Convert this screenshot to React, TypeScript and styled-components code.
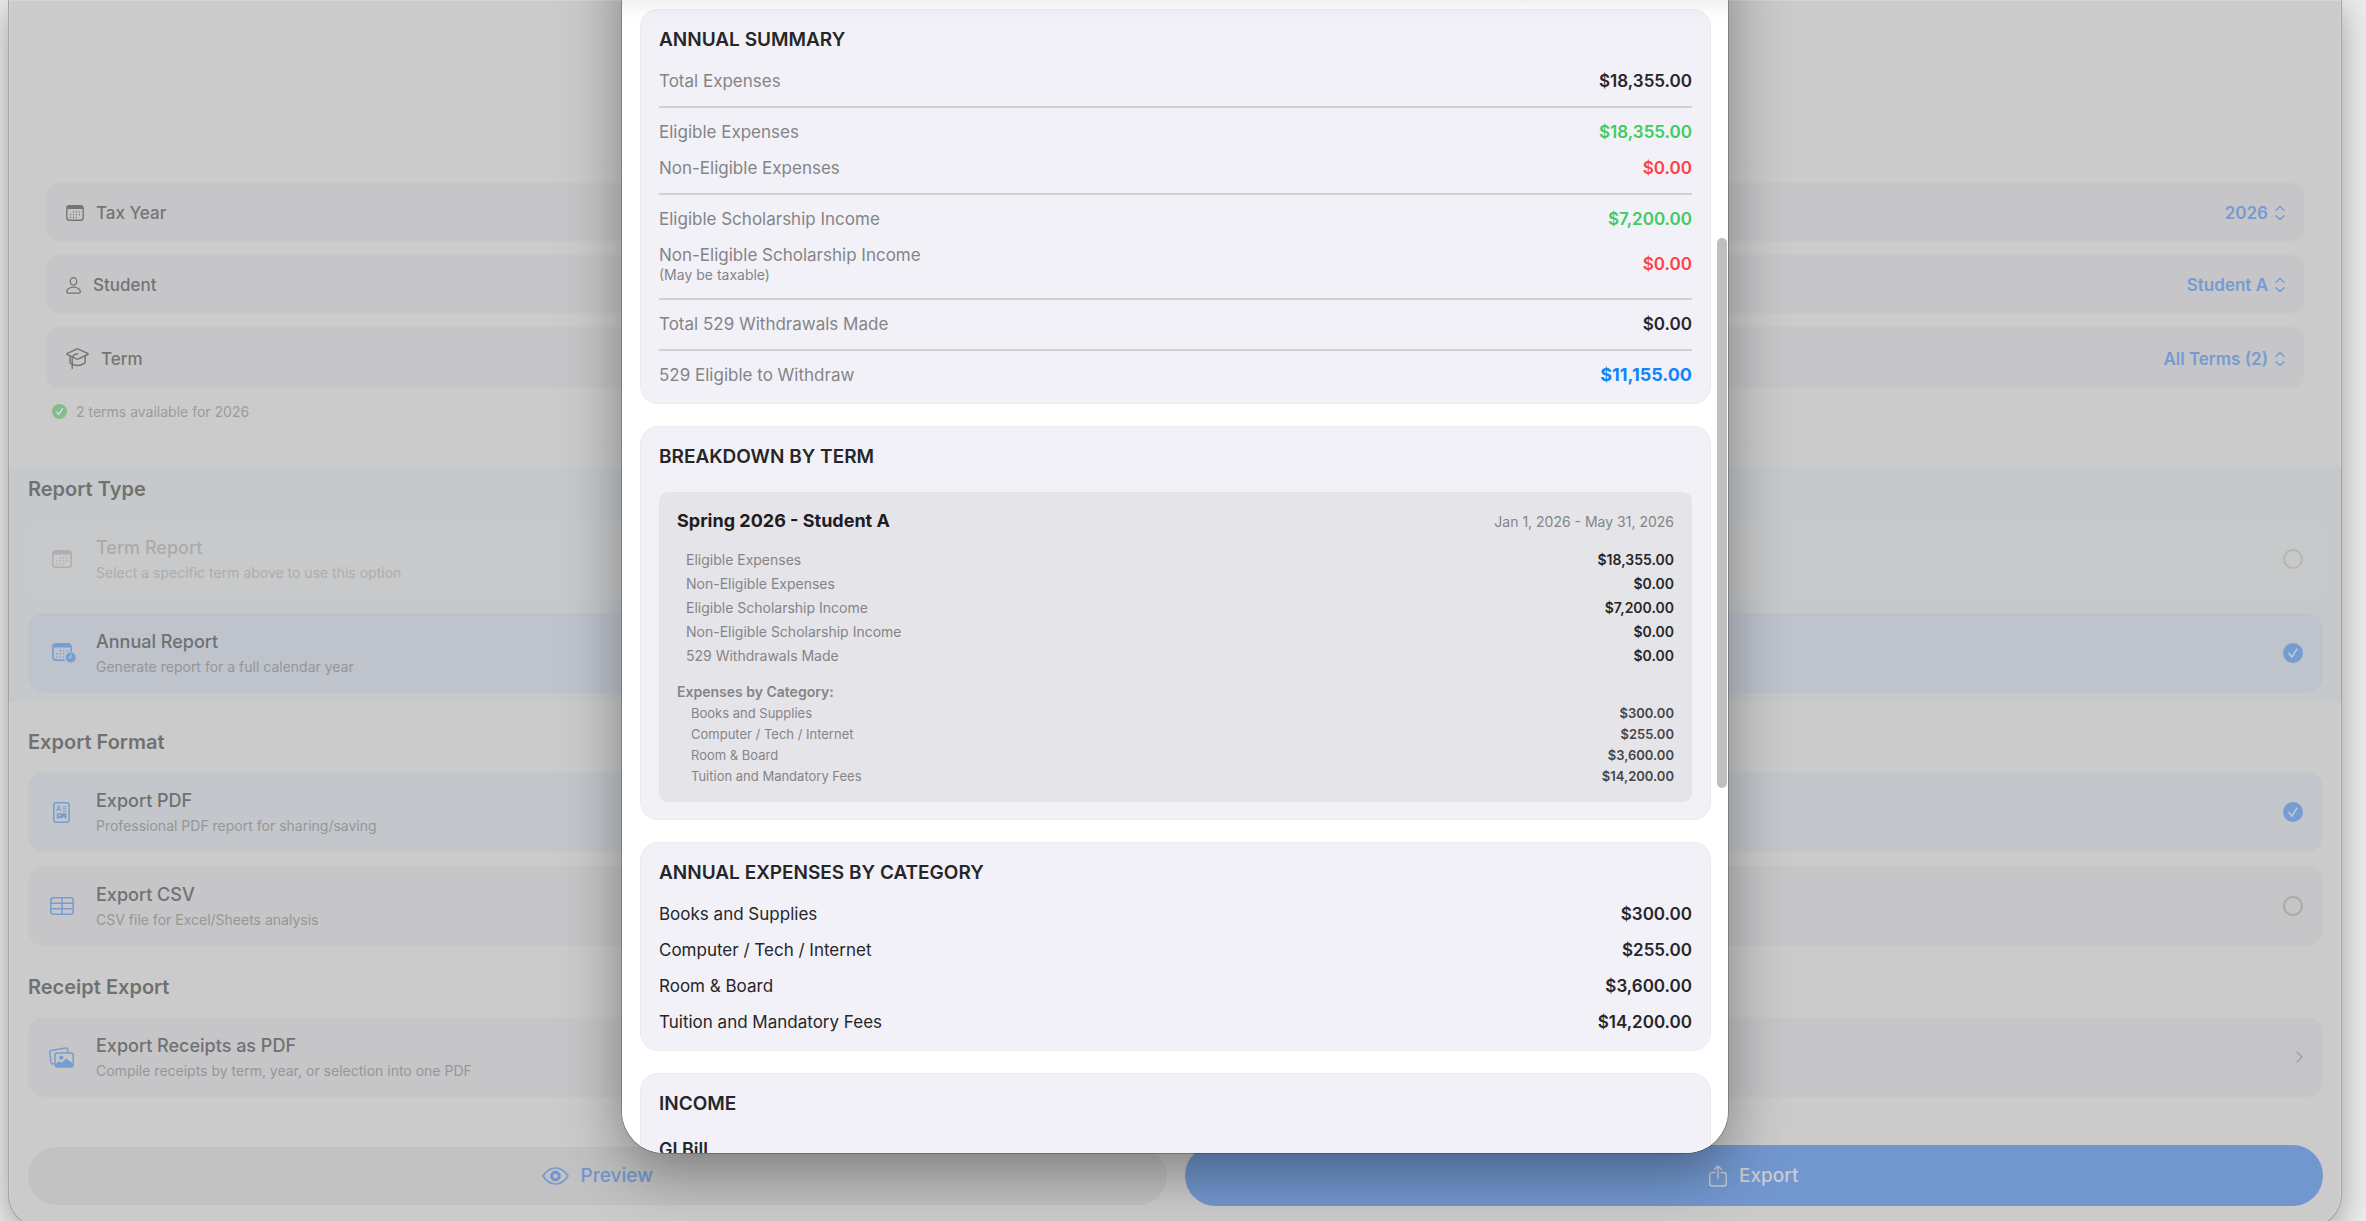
import React from "react";
import styled, { createGlobalStyle, css } from "styled-components";

const GlobalStyle = createGlobalStyle`
  *, *::before, *::after { box-sizing: border-box; }
  body {
    margin: 0;
    background: #ececec;
    font-family: Inter, "Liberation Sans", sans-serif;
    font-size: 18px;
    line-height: 22px;
    color: #6f6f6f;
  }
  h2, h3, p, dl, dd { margin: 0; }
  button, select, input { font: inherit; color: inherit; margin: 0; }
`;

/* ---------- window behind the sheet ---------- */

const Page = styled.div`
  position: relative;
  height: 100vh;
  overflow: hidden;
`;

const Window = styled.main`
  margin: 0 24px 0 8px;
  padding: 163px 18px 20px 19px;
  background: #cbcbcb;
  border: 1px solid #a2a2a2;
  border-top: 0;
  border-radius: 0 0 32px 32px;
  box-shadow: inset 0 0 0 1px #d6d6d6, 0 8px 32px rgba(0, 0, 0, 0.32);
`;

const FilterCard = styled.section`
  display: flex;
  flex-direction: column;
  gap: 14px;
  padding: 19px 18px 19px 17px;
  border: 1px solid #c8c8c9;
  border-radius: 18px;
`;

const FilterRow = styled.div`
  display: flex;
  align-items: center;
  justify-content: space-between;
  padding: 19px 19px 17px 20px;
  background: #c6c6c8;
  border-radius: 12px;
`;

const FilterLabel = styled.label`
  display: flex;
  align-items: center;
  gap: 12px;
  font-size: 17px;
  font-weight: 500;
  color: #747475;
`;

const SelectBox = styled.span`
  display: flex;
  align-items: center;
  gap: 7px;
  color: #759bd0;
`;

const Select = styled.select`
  appearance: none;
  border: 0;
  padding: 0;
  background: none;
  font-size: 17px;
  font-weight: 600;
  text-align: right;
  field-sizing: content;
`;

const Availability = styled.p`
  display: flex;
  align-items: center;
  gap: 9px;
  padding: 1px 6px 2px;
  font-size: 14px;
  line-height: 17px;
  color: #9b9b9b;
`;

const Section = styled.section<{ $tinted?: boolean; $top: number }>`
  margin: ${(p) => p.$top}px -18px 0 -19px;
  padding: 10px 18px 9px 19px;
  background: ${(p) => (p.$tinted ? "#c5c9cc" : "transparent")};
`;

const SectionTitle = styled.h2`
  margin-bottom: 18px;
  font-size: 20px;
  line-height: 24px;
  font-weight: 600;
  color: #717171;
`;

const OptionList = styled.div`
  display: flex;
  flex-direction: column;
  gap: 14px;
`;

type Tone = "faded" | "selected" | "tinted" | "plain";
const toneFill: Record<Tone, string> = {
  faded: "#c8c9ca",
  selected: "#bec3cc",
  tinted: "#c3c6cb",
  plain: "#c6c6c8",
};

const optionCard = css<{ $tone: Tone }>`
  display: flex;
  align-items: center;
  width: 100%;
  padding: 18px 20px 18px 19px;
  border: 0;
  border-radius: 16px;
  background: ${(p) => toneFill[p.$tone]};
  text-align: left;
`;
const OptionLabel = styled.label<{ $tone: Tone }>`
  ${optionCard}
`;
const OptionButton = styled.button<{ $tone: Tone }>`
  ${optionCard}
`;

const IconSlot = styled.span<{ $faded?: boolean }>`
  display: flex;
  justify-content: center;
  flex: none;
  width: 29px;
  margin-right: 20px;
  color: ${(p) => (p.$faded ? "#adaeaf" : "#769dd2")};
`;

const OptionText = styled.span<{ $faded?: boolean }>`
  display: flex;
  flex-direction: column;
  flex: 1;
  gap: 5px;
  color: ${(p) => (p.$faded ? "#aaabac" : "#707172")};
  font-weight: 500;

  small {
    font-size: 14px;
    line-height: 17px;
    font-weight: 400;
    color: ${(p) => (p.$faded ? "#acadae" : "#969697")};
  }
`;

const RadioMark = styled.span`
  display: grid;
  width: 20px;
  height: 20px;

  input, svg { grid-area: 1 / 1; }
  svg { visibility: hidden; }
  input:checked + svg { visibility: visible; }
`;

const Radio = styled.input`
  appearance: none;
  width: 20px;
  height: 20px;
  border: 2px solid #a8a8a9;
  border-radius: 50%;

  &:checked { border: 0; background: #769dd2; }
  &:disabled { border-color: #b5b6b7; }
`;

const Actions = styled.div`
  display: flex;
  align-items: center;
  gap: 18px;
  margin-top: 39px;
`;

const ActionButton = styled.button<{ $primary?: boolean }>`
  display: flex;
  align-items: center;
  justify-content: center;
  flex: 1;
  gap: 12px;
  height: ${(p) => (p.$primary ? 61 : 58)}px;
  border: 0;
  border-radius: 31px;
  background: ${(p) => (p.$primary ? "#7297cf" : "#c2c2c2")};
  color: ${(p) => (p.$primary ? "#cacccf" : "#7297cf")};
  font-size: 19px;
  font-weight: 500;
`;

/* ---------- report sheet ---------- */

const Sheet = styled.div`
  position: absolute;
  top: 0;
  bottom: 68px;
  left: calc(50% - 561px);
  width: 1106px;
  overflow: hidden;
  border-radius: 0 0 42px 42px;
  background: #fff;
  color: #262628;
`;

const SheetShadow = styled(Sheet)`
  top: -60px;
  overflow: visible;
  box-shadow: 0 0 0 1px rgba(0, 0, 0, 0.22), 0 18px 60px rgba(0, 0, 0, 0.38);
`;

const SheetBody = styled.div`
  display: flex;
  flex-direction: column;
  gap: 22px;
  padding: 9px 17px 0 18px;
`;

const HeaderFade = styled.div`
  position: absolute;
  top: 0;
  left: 0;
  right: 0;
  height: 28px;
  background: linear-gradient(rgba(0, 0, 0, 0.06), rgba(0, 0, 0, 0.01) 50%, rgba(0, 0, 0, 0));
`;

const ScrollThumb = styled.div`
  position: absolute;
  top: 238px;
  right: 1px;
  width: 10px;
  height: 550px;
  border-radius: 5px;
  background: #bfbfbf;
`;

const Card = styled.section`
  padding: 18px 18px 17px;
  border: 1px solid #ebebee;
  border-radius: 18px;
  background: #f2f1f7;
`;

const CardTitle = styled.h2<{ $loose?: boolean }>`
  margin-bottom: ${(p) => (p.$loose ? 23 : 18)}px;
  font-size: 19px;
  line-height: 24px;
  font-weight: 600;
`;

const List = styled.dl<{ $size: "body" | "small" | "tiny" }>`
  display: flex;
  flex-direction: column;
  ${(p) =>
    p.$size === "body"
      ? "gap: 14px; font-size: 17px;"
      : p.$size === "small"
        ? "gap: 7px; padding-left: 9px; font-size: 14px; line-height: 17px;"
        : "gap: 5px; padding-left: 14px; font-size: 13px; line-height: 16px;"}
`;

const Row = styled.div<{ $ruled?: boolean }>`
  display: flex;
  align-items: center;
  justify-content: space-between;
  ${(p) => p.$ruled && "padding-top: 13px; border-top: 2px solid #d1d1d5;"}
`;

const Term = styled.dt<{ $muted?: boolean }>`
  color: ${(p) => (p.$muted ? "#848487" : "inherit")};

  small {
    display: block;
    font-size: 14px;
    line-height: 18px;
  }
`;

const Amount = styled.dd<{ $color?: string; $strong?: boolean; $light?: boolean }>`
  color: ${(p) => p.$color ?? (p.$light ? "#454547" : "inherit")};
  font-weight: ${(p) => (p.$strong ? 700 : 600)};
  ${(p) => p.$strong && "font-size: 18px;"}
`;

const TermBox = styled.div`
  padding: 18px;
  border-radius: 9px;
  background: #e5e4e9;
`;

const TermHeader = styled.header`
  display: flex;
  align-items: center;
  justify-content: space-between;
  margin-bottom: 19px;
`;

const TermName = styled.h3`
  font-size: 18px;
  font-weight: 700;
  color: #1d1d1f;
`;

const TermDates = styled.span`
  font-size: 14px;
  line-height: 17px;
  color: #848487;
`;

const CategoryTitle = styled.h3`
  margin: 19px 0 5px;
  font-size: 14px;
  line-height: 17px;
  font-weight: 600;
  color: #848487;
`;

const GroupName = styled.h3`
  font-size: 18px;
  line-height: 22px;
  font-weight: 600;
`;

/* ---------- icons ---------- */

const dayCells = [
  [7.6, 6.9], [10.9, 6.9], [14.2, 6.9],
  [4.3, 10.1], [7.6, 10.1], [10.9, 10.1], [14.2, 10.1],
  [4.3, 13.3], [7.6, 13.3], [10.9, 13.3],
];

const CalendarDays = ({ count = 10, skip = -1 }: { count?: number; skip?: number }) => (
  <>
    {dayCells.slice(0, count).map(([x, y], i) =>
      i === skip ? null : <rect key={i} x={x} y={y} width="1.4" height="1.5" rx="0.4" fill="currentColor" />,
    )}
  </>
);

const CalendarIcon = ({ small }: { small?: boolean }) => (
  <svg width={small ? 18 : 20} height={small ? 16 : 18} viewBox="0 0 20 18" fill="none">
    <rect x="0.8" y="0.8" width="18.4" height="16.4" rx="2.8" stroke="currentColor" strokeWidth="1.5" />
    <path d="M1 4.600V3.400A2.400 2.400 0 0 1 3.400 1h13.200A2.400 2.400 0 0 1 19 3.400v1.200z" fill="currentColor" />
    <CalendarDays />
  </svg>
);

const CalendarClockIcon = () => (
  <svg width="29" height="20" viewBox="-5 0 29 20" fill="none">
    <path d="M12.600 17.100H3.700A2.800 2.800 0 0 1 .9 14.300V3.700A2.800 2.800 0 0 1 3.700.9h12.600a2.800 2.800 0 0 1 2.800 2.800v5" stroke="currentColor" strokeWidth="1.6" />
    <path d="M1 4.600V3.400A2.400 2.400 0 0 1 3.400 1h13.200A2.400 2.400 0 0 1 19 3.400v1.200z" fill="currentColor" />
    <CalendarDays skip={6} />
    <circle cx="18.7" cy="14.4" r="5" fill="currentColor" />
    <path d="M18.900 11.600v3h-2.400" stroke="#bec3cc" strokeWidth="1.1" strokeLinecap="round" />
  </svg>
);

const PersonIcon = () => (
  <svg width="15" height="17" viewBox="0 0 15 17" fill="none" stroke="currentColor" strokeWidth="1.3">
    <ellipse cx="7.5" cy="4.4" rx="3.2" ry="3.7" />
    <path d="M2.200 16.100h10.600c1.100 0 1.600-.5 1.600-1.300 0-2-2.600-4.600-6.900-4.600S.6 12.800.6 14.800c0 .8.500 1.300 1.600 1.300z" />
  </svg>
);

const CapIcon = () => (
  <svg width="23" height="25" viewBox="0 0 23 25" fill="none" stroke="currentColor" strokeWidth="1.4" strokeLinejoin="round" strokeLinecap="round">
    <path d="M10.600 3.100Q11.500 2.700 12.400 3.100L21.600 7.300Q22.600 7.900 21.600 8.500L12.600 12.900Q11.500 13.400 10.400 12.900L1.400 8.600Q.5 8 1.400 7.400z" />
    <path d="M4 10v6.200q0 .7.700 1.200 6.800 4.200 13.600 0 .9-.5.900-1.300V9.900" />
    <path d="M11.600 7.700Q6.200 8.800 6.200 12.200V22.500" />
  </svg>
);

const ChevronsIcon = () => (
  <svg width="10" height="16" viewBox="0 0 10 16" fill="none" stroke="currentColor" strokeWidth="1.4" strokeLinecap="round" strokeLinejoin="round">
    <path d="M1 5.200 5 1.400l4 3.800M1 10.800 5 14.600l4-3.800" />
  </svg>
);

const CheckBadgeIcon = () => (
  <svg width="15" height="15" viewBox="0 0 15 15" fill="none">
    <circle cx="7.500" cy="7.500" r="7.500" fill="#83bc8d" />
    <path d="m4.500 7.900 2.200 2.600 3.800-5.800" stroke="#d3dcd5" strokeWidth="1.400" strokeLinecap="round" strokeLinejoin="round" />
  </svg>
);

const CheckIcon = () => (
  <svg width="20" height="20" viewBox="0 0 20 20" fill="none">
    <path d="m6 10.600 2.900 3.600 5-8" stroke="#c2c9d4" strokeWidth="1.600" strokeLinecap="round" strokeLinejoin="round" />
  </svg>
);

const DocumentIcon = () => (
  <svg width="17" height="21" viewBox="0 0 17 21" fill="none" stroke="currentColor">
    <rect x="0.800" y="0.800" width="15.400" height="19.400" rx="2.600" strokeWidth="1.500" />
    <path d="M3.800 9 5.700 4.200 7.600 9M4.500 7.500h2.400M9.600 4.800h4M9.600 7h4M9.600 9.200h4" strokeWidth="1.100" />
    <path d="M3.800 11.300h9.600v5.800l-3-2.300-2.300 1.900-1.800-1-2.500 1.600z" fill="currentColor" stroke="none" />
    <circle cx="6.500" cy="13.600" r="1" fill="#c3c6cb" stroke="none" />
  </svg>
);

const TableIcon = () => (
  <svg width="24" height="18" viewBox="0 0 24 18" fill="none" stroke="currentColor" strokeWidth="1.500">
    <rect x="0.800" y="0.800" width="22.400" height="16.400" rx="2.600" />
    <path d="M1 6.200h22M1 11.700h22M12 1v16" />
  </svg>
);

const PhotosIcon = () => (
  <svg width="25" height="21" viewBox="0 0 25 21" fill="none">
    <path d="M4.600 16.800 3.500 16.900Q2.300 17 2 15.700L.8 5.500Q.7 3.900 2.200 3.600L16.600 1Q18.200.8 18.500 2.300L18.800 4.600" stroke="currentColor" strokeWidth="1.500" strokeLinecap="round" />
    <rect x="6" y="6" width="18.200" height="14" rx="2.500" stroke="currentColor" strokeWidth="1.500" />
    <path d="M6 17.500 10 14l2.300 1.900L17.200 11.500 24 16.500V18q0 2-2 2H8q-2 0-2-2z" fill="currentColor" />
    <circle cx="12.300" cy="10.700" r="2.100" fill="currentColor" />
  </svg>
);

const EyeIcon = () => (
  <svg width="27" height="18" viewBox="0 0 27 18" fill="none">
    <path d="M1 9Q6.200 1 13.500 1T26 9q-5.200 8-12.500 8T1 9z" stroke="currentColor" strokeWidth="1.600" />
    <circle cx="13.500" cy="9" r="3.800" stroke="currentColor" strokeWidth="3.200" />
  </svg>
);

const ShareIcon = () => (
  <svg width="18" height="22" viewBox="0 0 18 22" fill="none" stroke="currentColor" strokeWidth="1.400" strokeLinecap="round" strokeLinejoin="round">
    <path d="M6 7.500H3.300Q.8 7.500.8 10v8.500Q.8 21 3.300 21h11.400q2.500 0 2.500-2.500V10q0-2.500-2.500-2.500H12" />
    <path d="M9 13.500V1M5.500 4.300 9 .9l3.500 3.400" />
  </svg>
);

const ChevronRightIcon = () => (
  <svg width="7" height="12" viewBox="0 0 7 12" fill="none" stroke="#a0a0a2" strokeWidth="1.500" strokeLinecap="round" strokeLinejoin="round">
    <path d="m1 1 5 5-5 5" />
  </svg>
);

/* ---------- content ---------- */

const filters = [
  { id: "tax-year", label: "Tax Year", value: "2026", icon: <CalendarIcon small /> },
  { id: "student", label: "Student", value: "Student A", icon: <PersonIcon /> },
  { id: "term", label: "Term", value: "All Terms (2)", icon: <CapIcon /> },
];

const GREEN = "#3fcb5f";
const RED = "#fb4146";
const BLUE = "#0f87fb";

const summary = [
  { label: "Total Expenses", value: "$18,355.00" },
  { label: "Eligible Expenses", value: "$18,355.00", color: GREEN, ruled: true },
  { label: "Non-Eligible Expenses", value: "$0.00", color: RED },
  { label: "Eligible Scholarship Income", value: "$7,200.00", color: GREEN, ruled: true },
  { label: "Non-Eligible Scholarship Income", note: "(May be taxable)", value: "$0.00", color: RED },
  { label: "Total 529 Withdrawals Made", value: "$0.00", ruled: true },
  { label: "529 Eligible to Withdraw", value: "$11,155.00", color: BLUE, ruled: true, strong: true },
];

const termTotals = [
  ["Eligible Expenses", "$18,355.00"],
  ["Non-Eligible Expenses", "$0.00"],
  ["Eligible Scholarship Income", "$7,200.00"],
  ["Non-Eligible Scholarship Income", "$0.00"],
  ["529 Withdrawals Made", "$0.00"],
];

const categories = [
  ["Books and Supplies", "$300.00"],
  ["Computer / Tech / Internet", "$255.00"],
  ["Room & Board", "$3,600.00"],
  ["Tuition and Mandatory Fees", "$14,200.00"],
];

interface OptionProps {
  group: string;
  title: string;
  note: string;
  icon: React.ReactNode;
  tone: Tone;
  checked?: boolean;
}

const Option = ({ group, title, note, icon, tone, checked }: OptionProps) => {
  const faded = tone === "faded";
  return (
    <OptionLabel $tone={tone}>
      <IconSlot $faded={faded}>{icon}</IconSlot>
      <OptionText $faded={faded}>
        {title}
        <small>{note}</small>
      </OptionText>
      <RadioMark>
        <Radio type="radio" name={group} defaultChecked={checked} disabled={faded} />
        <CheckIcon />
      </RadioMark>
    </OptionLabel>
  );
};

const Pairs = ({ rows, size, muted }: { rows: string[][]; size: "body" | "small" | "tiny"; muted?: boolean }) => (
  <List $size={size}>
    {rows.map(([label, value]) => (
      <Row key={label}>
        <Term $muted={muted}>{label}</Term>
        <Amount $light={size === "tiny"}>{value}</Amount>
      </Row>
    ))}
  </List>
);

export default function App() {
  return (
    <Page>
      <GlobalStyle />
      <Window>
        <FilterCard>
          {filters.map((f) => (
            <FilterRow key={f.id}>
              <FilterLabel htmlFor={f.id}>
                {f.icon}
                {f.label}
              </FilterLabel>
              <SelectBox>
                <Select id={f.id}>
                  <option>{f.value}</option>
                </Select>
                <ChevronsIcon />
              </SelectBox>
            </FilterRow>
          ))}
          <Availability>
            <CheckBadgeIcon />2 terms available for 2026
          </Availability>
        </FilterCard>

        <Section $tinted $top={25}>
          <SectionTitle>Report Type</SectionTitle>
          <OptionList>
            <Option group="report" tone="faded" title="Term Report" note="Select a specific term above to use this option" icon={<CalendarIcon />} />
            <Option group="report" tone="selected" title="Annual Report" note="Generate report for a full calendar year" icon={<CalendarClockIcon />} checked />
          </OptionList>
        </Section>

        <Section $top={18}>
          <SectionTitle>Export Format</SectionTitle>
          <OptionList>
            <Option group="format" tone="tinted" title="Export PDF" note="Professional PDF report for sharing/saving" icon={<DocumentIcon />} checked />
            <Option group="format" tone="plain" title="Export CSV" note="CSV file for Excel/Sheets analysis" icon={<TableIcon />} />
          </OptionList>
        </Section>

        <Section $top={10}>
          <SectionTitle>Receipt Export</SectionTitle>
          <OptionButton type="button" $tone="plain">
            <IconSlot>
              <PhotosIcon />
            </IconSlot>
            <OptionText>
              Export Receipts as PDF
              <small>Compile receipts by term, year, or selection into one PDF</small>
            </OptionText>
            <ChevronRightIcon />
          </OptionButton>
        </Section>

        <Actions>
          <ActionButton type="button">
            <EyeIcon />
            Preview
          </ActionButton>
          <ActionButton type="button" $primary>
            <ShareIcon />
            Export
          </ActionButton>
        </Actions>
      </Window>

      <SheetShadow aria-hidden="true" />
      <Sheet role="dialog" aria-label="Annual report">
        <SheetBody>
          <Card>
            <CardTitle>ANNUAL SUMMARY</CardTitle>
            <List $size="body">
              {summary.map((s) => (
                <Row key={s.label} $ruled={s.ruled}>
                  <Term $muted>
                    {s.label}
                    {s.note && <small>{s.note}</small>}
                  </Term>
                  <Amount $color={s.color} $strong={s.strong}>
                    {s.value}
                  </Amount>
                </Row>
              ))}
            </List>
          </Card>

          <Card>
            <CardTitle $loose>BREAKDOWN BY TERM</CardTitle>
            <TermBox>
              <TermHeader>
                <TermName>Spring 2026 - Student A</TermName>
                <TermDates>Jan 1, 2026 - May 31, 2026</TermDates>
              </TermHeader>
              <Pairs rows={termTotals} size="small" muted />
              <CategoryTitle>Expenses by Category:</CategoryTitle>
              <Pairs rows={categories} size="tiny" muted />
            </TermBox>
          </Card>

          <Card>
            <CardTitle>ANNUAL EXPENSES BY CATEGORY</CardTitle>
            <Pairs rows={categories} size="body" />
          </Card>

          <Card>
            <CardTitle $loose>INCOME</CardTitle>
            <GroupName>GI Bill</GroupName>
          </Card>
        </SheetBody>
        <HeaderFade />
        <ScrollThumb />
      </Sheet>
    </Page>
  );
}
